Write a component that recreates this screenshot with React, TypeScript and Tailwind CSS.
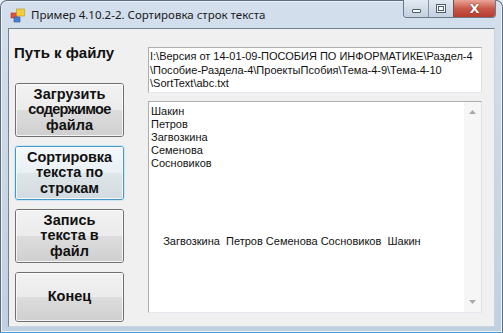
import React from "react";

function AppIcon() {
  return (
    <svg width="16" height="16" viewBox="0 0 16 16">
      <rect x="1" y="6" width="6" height="5" fill="#e0533c" stroke="#a8331f" strokeWidth="0.6" />
      <rect x="6.5" y="2" width="8" height="7" fill="#f4cf3c" stroke="#b99322" strokeWidth="0.6" />
      <rect x="4" y="10" width="6" height="5" fill="#4a7fd0" stroke="#2c579b" strokeWidth="0.6" />
    </svg>
  );
}

type Line = { t: string; c?: string };

function WinButton({ lines, focused, h = "h-[54px]" }: { lines: Line[]; focused?: boolean; h?: string }) {
  const outer = focused
    ? "border-[#4796c6] shadow-[0_0_0_1px_#cbe6f5]"
    : "border-[#707070]";
  const top = focused
    ? "bg-gradient-to-b from-[#f3f8fb] to-[#e9f0f4]"
    : "bg-gradient-to-b from-[#f2f2f2] to-[#ebebeb]";
  const bottom = focused
    ? "bg-gradient-to-b from-[#dfe6ea] to-[#d2dbe0]"
    : "bg-gradient-to-b from-[#dddddd] to-[#cfcfcf]";
  return (
    <div className={`relative w-[109px] ${h} rounded-[3px] border ${outer} overflow-hidden`}>
      <div className="absolute inset-0 flex flex-col">
        <div className={`flex-1 ${top}`} />
        <div className={`flex-1 ${bottom}`} />
      </div>
      <div className="absolute inset-0 rounded-[2px] border border-[#fcfcfc]/80" />
      <div className="relative flex h-full flex-col items-center justify-center font-['Liberation_Sans',Arial,sans-serif] text-[14.5px] font-bold leading-[15.5px] text-[#111]">
        {lines.map((l) => (
          <div key={l.t} className={l.c}>{l.t}</div>
        ))}
      </div>
    </div>
  );
}

export default function App() {
  const names = ["Шакин", "Петров", "Загвозкина", "Семенова", "Сосновиков"];
  return (
    <div className="w-[503px] h-[333px] overflow-hidden bg-[#e9eef4]">
      <div className="flex h-full w-full flex-col rounded-t-[7px] border border-[#5d6c7d] border-b-[#4f9bd0] bg-gradient-to-b from-[#d3dfec] via-[#c9d7e6] to-[#c1d0e1] shadow-[inset_0_0_0_1px_#eef3f8]">
        {/* Title bar */}
        <div className="relative flex h-[27px] shrink-0 items-center pl-[9px]">
          <AppIcon />
          <span className="ml-[5px] font-['Noto_Sans',sans-serif] text-[11.5px] leading-none text-[#1b1b1b]">
            Пример 4.10.2-2. Сортировка строк текста
          </span>
          <div className="absolute right-[6px] top-[-1px] flex h-[18px] overflow-hidden rounded-b-[4px] border border-t-0 border-[#6b7a8b]">
            <div className="flex w-[25px] items-center justify-center border-r border-[#8593a3] bg-gradient-to-b from-[#e2e9f2] to-[#c3d0df]">
              <div className="mt-[5px] h-[4px] w-[9px] rounded-[1px] border border-[#4c5a6a] bg-white" />
            </div>
            <div className="flex w-[25px] items-center justify-center border-r border-[#7c4a45] bg-gradient-to-b from-[#e2e9f2] to-[#c3d0df]">
              <div className="h-[9px] w-[10px] border border-[#4c5a6a] bg-white p-[1px]">
                <div className="h-full w-full border border-[#4c5a6a]" />
              </div>
            </div>
            <div className="flex w-[41px] items-center justify-center bg-gradient-to-b from-[#e8a597] via-[#c9584a] to-[#b73c2c]">
              <span className="font-['DejaVu_Sans',sans-serif] text-[13px] font-bold leading-none text-white [text-shadow:0_0_1px_#5a1a12,0_0_1px_#5a1a12]">
                X
              </span>
            </div>
          </div>
        </div>
        {/* Client area */}
        <div className="mx-[7px] mb-[5px] flex h-[299px] border border-[#76838f] border-b-[#c9d4df] border-r-[#c9d4df] bg-[#f0f0f0]">
          <div className="ml-[6px] flex w-[109px] flex-col">
            <div className="-ml-px mt-[15px] h-[17px] font-['Liberation_Sans',Arial,sans-serif] text-[15px] font-bold leading-[17px] text-[#111]">
              Путь к файлу
            </div>
            <div className="mt-[22px] flex flex-col gap-[9px]">
              <WinButton lines={[{ t: "Загрузить" }, { t: "содержимое", c: "tracking-[-0.7px]" }, { t: "файла" }]} />
              <WinButton lines={[{ t: "Сортировка", c: "tracking-[-0.1px]" }, { t: "текста по" }, { t: "строкам" }]} focused />
              <WinButton lines={[{ t: "Запись" }, { t: "текста в" }, { t: "файл" }]} />
              <WinButton lines={[{ t: "Конец" }]} h="h-[50px]" />
            </div>
          </div>
          <div className="ml-[24px] flex w-[334px] flex-col">
            <div className="mt-[18px] h-[46px] border border-[#abadb3] border-b-[#e3e9ef] border-r-[#dbdfe6] bg-white pl-[1px] pt-[2px] font-['Liberation_Sans',Arial,sans-serif] text-[11px] leading-[13.5px] text-[#111] whitespace-pre">
              <div>I:\Версия от 14-01-09-ПОСОБИЯ ПО ИНФОРМАТИКЕ\Раздел-4</div>
              <div>\Пособие-Раздела-4\ПроектыПсобия\Тема-4-9\Тема-4-10</div>
              <div>\SortText\abc.txt</div>
            </div>
            <div className="mt-[8px] flex h-[212px] border border-[#abadb3] border-b-[#e3e9ef] border-r-[#dbdfe6] bg-white">
              <div className="flex-1 pl-[2px] pt-[3px] font-['Liberation_Sans',Arial,sans-serif] text-[11px] leading-[13px] text-[#111] whitespace-pre">
                {names.map((n) => (
                  <div key={n}>{n}</div>
                ))}
                <div className="mt-[65px]">{"    Загвозкина  Петров Семенова Сосновиков  Шакин"}</div>
              </div>
              <div className="flex w-[17px] flex-col items-center justify-between bg-[#f6f6f6] py-[8px]">
                <svg width="7" height="4" viewBox="0 0 7 4">
                  <path d="M0 4 L3.5 0 L7 4 Z" fill="#a9a9a9" />
                </svg>
                <svg width="7" height="4" viewBox="0 0 7 4">
                  <path d="M0 0 L3.5 4 L7 0 Z" fill="#a9a9a9" />
                </svg>
              </div>
            </div>
          </div>
        </div>
      </div>
    </div>
  );
}
